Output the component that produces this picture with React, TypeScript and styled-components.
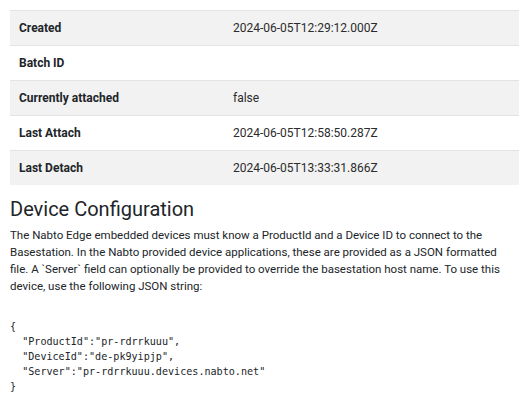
import React from "react";
import styled, { createGlobalStyle } from "styled-components";

const Global = createGlobalStyle`
  html, body { margin: 0; padding: 0; background: #fff; }
  body {
    font-family: Roboto, "Liberation Sans", Arial, sans-serif;
    color: #212529;
    font-size: 12px;
  }
`;

const Page = styled.div`
  padding: 10px 6px 0 10px;
  display: flex;
  flex-direction: column;
`;

const Table = styled.div`
  display: grid;
  grid-template-columns: 214px 1fr;
`;

const Cell = styled.div<{ $striped: boolean; $head?: boolean }>`
  padding: 8px 9px;
  line-height: 18px;
  font-size: 12px;
  border-top: 1px solid #e3e3e3;
  background: ${(p) => (p.$striped ? "#f2f2f2" : "#ffffff")};
  font-weight: ${(p) => (p.$head ? 700 : 400)};
  color: ${(p) => (p.$head ? "#212529" : "#2b2b2b")};
  min-height: 18px;
`;

const Heading = styled.h2`
  margin: 12px 0 0 0;
  font-size: 20px;
  font-weight: 400;
  line-height: 24px;
  color: #212529;
`;

const Para = styled.p`
  margin: 6px 0 0 0;
  font-size: 11.5px;
  line-height: 17px;
  color: #212529;
  white-space: nowrap;
`;

const Code = styled.pre`
  margin: 24px 0 0 0;
  font-family: "DejaVu Sans Mono", "Liberation Mono", monospace;
  font-size: 10.1px;
  line-height: 15px;
  color: #212529;
`;

const rows: [string, string][] = [
  ["Created", "2024-06-05T12:29:12.000Z"],
  ["Batch ID", ""],
  ["Currently attached", "false"],
  ["Last Attach", "2024-06-05T12:58:50.287Z"],
  ["Last Detach", "2024-06-05T13:33:31.866Z"],
];

const json = `{
  "ProductId":"pr-rdrrkuuu",
  "DeviceId":"de-pk9yipjp",
  "Server":"pr-rdrrkuuu.devices.nabto.net"
}`;

export default function App() {
  return (
    <>
      <Global />
      <Page>
        <Table>
          {rows.map(([k, v], i) => (
            <React.Fragment key={k}>
              <Cell $striped={i % 2 === 0} $head>
                {k}
              </Cell>
              <Cell $striped={i % 2 === 0}>{v}</Cell>
            </React.Fragment>
          ))}
        </Table>
        <Heading>Device Configuration</Heading>
        <Para>
          The Nabto Edge embedded devices must know a ProductId and a Device ID to connect to the
          <br />
          Basestation. In the Nabto provided device applications, these are provided as a JSON formatted
          <br />
          file. A `Server` field can optionally be provided to override the basestation host name. To use this
          <br />
          device, use the following JSON string:
        </Para>
        <Code>{json}</Code>
      </Page>
    </>
  );
}
